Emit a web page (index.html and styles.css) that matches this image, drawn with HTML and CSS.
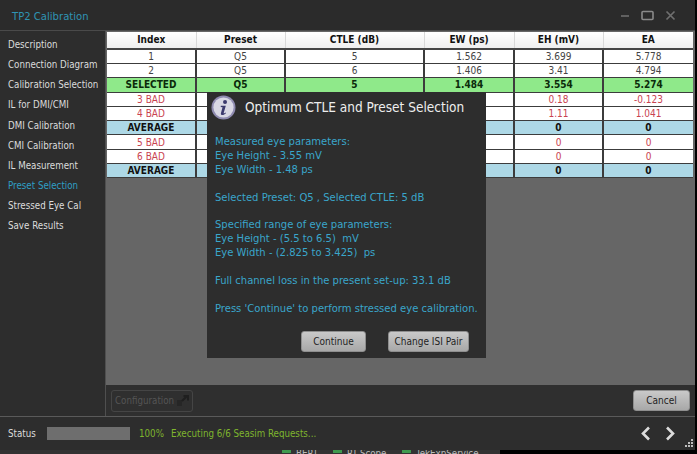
FILE: index.html
```html
<!DOCTYPE html>
<html lang="en">
<head>
  <meta charset="UTF-8" />
  <title>TP2 Calibration</title>
  <link rel="stylesheet" href="styles.css">
</head>
<body>
  <div class="window">
    <header class="titlebar">
      <span class="title">TP2 Calibration</span>
      <div class="win-controls">
        <svg width="10" height="10" viewBox="0 0 10 10"><path d="M1 6h8" stroke="#6f6f6f" stroke-width="1.6"/></svg>
        <svg width="13" height="11" viewBox="0 0 13 11"><rect x="1" y="1.5" width="11" height="8" rx="1" fill="none" stroke="#8a8a8a" stroke-width="1.6"/></svg>
        <svg width="11" height="11" viewBox="0 0 11 11"><path d="M1.5 1.5l8 8M9.5 1.5l-8 8" stroke="#6f6f6f" stroke-width="1.7"/></svg>
      </div>
    </header>

    <div class="body">
      <nav class="sidebar">
        <a>Description</a>
        <a>Connection Diagram</a>
        <a>Calibration Selection</a>
        <a>IL for DMI/CMI</a>
        <a>DMI Calibration</a>
        <a>CMI Calibration</a>
        <a>IL Measurement</a>
        <a class="active">Preset Selection</a>
        <a>Stressed Eye Cal</a>
        <a>Save Results</a>
      </nav>

      <main class="main">
        <div class="content">
          <table class="results">
            <thead>
              <tr><th>Index</th><th>Preset</th><th>CTLE (dB)</th><th>EW (ps)</th><th>EH (mV)</th><th>EA</th></tr>
            </thead>
            <tbody>
              <tr><td>1</td><td>Q5</td><td>5</td><td>1.562</td><td>3.699</td><td>5.778</td></tr>
              <tr><td>2</td><td>Q5</td><td>6</td><td>1.406</td><td>3.41</td><td>4.794</td></tr>
              <tr class="selected"><td>SELECTED</td><td>Q5</td><td>5</td><td>1.484</td><td>3.554</td><td>5.274</td></tr>
              <tr class="bad"><td>3 BAD</td><td></td><td></td><td></td><td>0.18</td><td>-0.123</td></tr>
              <tr class="bad"><td>4 BAD</td><td></td><td></td><td></td><td>1.11</td><td>1.041</td></tr>
              <tr class="average"><td>AVERAGE</td><td></td><td></td><td></td><td>0</td><td>0</td></tr>
              <tr class="bad"><td>5 BAD</td><td></td><td></td><td></td><td>0</td><td>0</td></tr>
              <tr class="bad"><td>6 BAD</td><td></td><td></td><td></td><td>0</td><td>0</td></tr>
              <tr class="average"><td>AVERAGE</td><td></td><td></td><td></td><td>0</td><td>0</td></tr>
            </tbody>
          </table>

          <div class="dialog">
            <div class="dialog-head">
              <svg class="info-icon" width="25" height="25" viewBox="0 0 26 26">
                <circle cx="13" cy="13" r="12.5" fill="#8f8bb0"/>
                <circle cx="13" cy="13" r="10.5" fill="#d9d8e4"/>
                <circle cx="14.6" cy="7.2" r="2.1" fill="#3c3a6e"/>
                <path d="M10.2 11.2h5.2l-2.2 7.6c-.1.5.3.6.8.3l1.2-.8.3.6c-1.2 1.2-2.4 1.9-3.6 1.9-1.3 0-1.9-.7-1.6-1.9l1.7-6.1-1.9-.4z" fill="#3c3a6e"/>
              </svg>
              <h2>Optimum CTLE and Preset Selection</h2>
            </div>
            <div class="dialog-text">
              <p>Measured eye parameters:<br>Eye Height - 3.55 mV<br>Eye Width - 1.48 ps</p>
              <p>Selected Preset: Q5 , Selected CTLE: 5 dB</p>
              <p>Specified range of eye parameters:<br>Eye Height - (5.5 to 6.5)&nbsp; mV<br>Eye Width - (2.825 to 3.425)&nbsp; ps</p>
              <p>Full channel loss in the present set-up: 33.1 dB</p>
              <p>Press 'Continue' to perform stressed eye calibration.</p>
            </div>
            <div class="dialog-actions">
              <button class="btn btn-continue">Continue</button>
              <button class="btn btn-isi">Change ISI Pair</button>
            </div>
          </div>
        </div>

        <div class="action-bar">
          <div class="config-btn">
            <span>Configuration</span>
            <svg width="12" height="11" viewBox="0 0 12 11"><path d="M0 5h5v6H0z" fill="#262626"/><path d="M5 6l5-5M6.5 1H11v4.5" stroke="#1f1f1f" stroke-width="2" fill="none"/></svg>
          </div>
          <button class="btn btn-cancel">Cancel</button>
        </div>
      </main>
    </div>

    <footer class="statusbar">
      <span class="status-label">Status</span>
      <div class="progress"></div>
      <span class="percent">100%</span>
      <span class="status-msg">Executing 6/6 Seasim Requests...</span>
      <div class="nav-arrows">
        <svg width="10" height="15" viewBox="0 0 10 15"><path d="M8 1.5l-6 6 6 6" fill="none" stroke="#dcdcdc" stroke-width="2.6"/></svg>
        <svg width="10" height="15" viewBox="0 0 10 15"><path d="M2 1.5l6 6-6 6" fill="none" stroke="#dcdcdc" stroke-width="2.6"/></svg>
      </div>
      <svg class="grip" width="9" height="9" viewBox="0 0 9 9">
        <path d="M7 0h2v2H7zM4 3h2v2H4zM7 3h2v2H7zM1 6h2v2H1zM4 6h2v2H4zM7 6h2v2H7z" fill="#bdbdbd"/>
      </svg>
    </footer>
  </div>

  <div class="taskbar">
    <div class="task-items">
      <span class="task task-bert"><i></i>BERT</span>
      <span class="task task-scope"><i></i>RT-Scope</span>
      <span class="task"><i></i>TekExpService</span>
    </div>
  </div>
</body>
</html>
```

FILE: styles.css
```css
* {
  box-sizing: border-box;
}

html, body {
  margin: 0;
  padding: 0;
  height: 100%;
}

body {
  width: 697px;
  height: 454px;
  overflow: hidden;
  background: #000;
  font-family: "DejaVu Sans Condensed", "DejaVu Sans", sans-serif;
  font-stretch: condensed;
  font-size: 9.7px;
  color: #ddd;
}

.window {
  width: 695px;
  height: 450px;
  background: #2d2d2d;
  display: flex;
  flex-direction: column;
}

.titlebar {
  height: 30px;
  flex: none;
  display: flex;
  align-items: center;
  justify-content: space-between;
  padding: 0 19px 0 12px;
  background: #2b2b2b;
}

.title {
  color: #2f93b3;
  font-size: 11.2px;
  padding-top: 2px;
}

.win-controls {
  display: flex;
  align-items: center;
  gap: 11px;
}

.body {
  flex: 1;
  display: flex;
  min-height: 0;
  border-bottom: 1px solid #5a5a5a;
}

.sidebar {
  width: 106px;
  flex: none;
  padding-top: 4px;
  background: #2d2d2d;
  border-top: 1px solid #4a4a4a;
  border-right: 1px solid #4f4f4f;
  display: flex;
  flex-direction: column;
}

.sidebar a {
  height: 20.15px;
  line-height: 20px;
  padding-left: 8px;
  color: #dcdcdc;
  white-space: nowrap;
}

.sidebar a.active {
  color: #2f9fc4;
}

.main {
  flex: 1;
  display: flex;
  flex-direction: column;
  min-width: 0;
}

.content {
  position: relative;
  height: 355px;
  flex: none;
  background: #666;
  padding: 1px 2px 0 1px;
  border-top: 1px solid #4a4a4a;
}

.results {
  width: 586px;
  table-layout: fixed;
  border-collapse: collapse;
  background: #fff;
  font-size: 10px;
  text-align: center;
  line-height: 12px;
}

.results th {
  height: 17px;
  padding: 0;
  color: #111;
  font-weight: 700;
  background: linear-gradient(#ffffff, #eeeeee);
  border-right: 1px solid #d8d8d8;
  border-bottom: 2px solid #444;
}

.results td {
  height: 14.3px;
  padding: 1px 0 0;
  color: #444;
  border: 1px solid #3c3c3c;
  border-width: 0 2px 1px 0;
}

.results th:nth-child(1) { width: 89px; }
.results th:nth-child(2) { width: 89px; }
.results th:nth-child(3) { width: 139px; }
.results th:nth-child(4) { width: 90px; }
.results th:nth-child(5) { width: 89px; }

.results td:last-child,
.results th:last-child {
  border-right: 0;
}

.selected td {
  background: #8fe98a;
  color: #0b2a0b;
  font-weight: 700;
}

.results .bad td {
  color: #c9434f;
}

.results .average td {
  background: #add8e6;
  color: #111;
  font-weight: 700;
}

.dialog {
  position: absolute;
  left: 101px;
  top: 61px;
  width: 279px;
  height: 266px;
  background: #2d2d2d;
  padding: 0 8px;
  display: flex;
  flex-direction: column;
}

.dialog-head {
  display: flex;
  align-items: center;
  gap: 9px;
  height: 30px;
  margin-left: -4px;
}

.dialog-head h2 {
  margin: 0;
  font-size: 13.5px;
  font-weight: 400;
  color: #eee;
  white-space: nowrap;
}

.dialog-text {
  margin-top: 13px;
  color: #3aa6cb;
  font-size: 11.15px;
  line-height: 13.9px;
  white-space: nowrap;
}

.dialog-text p {
  margin: 0 0 13.9px;
}

.dialog-actions {
  display: flex;
  justify-content: flex-end;
  gap: 22px;
  padding-right: 9px;
  margin-top: auto;
  margin-bottom: 6px;
}

.btn {
  height: 21px;
  padding: 0;
  border: 1px solid #8e8e8e;
  border-radius: 3px;
  background: linear-gradient(#c9c9c9, #a8a8a8);
  color: #222;
  font-family: inherit;
  font-stretch: inherit;
  font-size: 10px;
  white-space: nowrap;
}

.btn-continue { width: 65px; }
.btn-isi { width: 81px; }
.btn-cancel { width: 57px; }

.action-bar {
  flex: 1;
  display: flex;
  align-items: center;
  justify-content: space-between;
  padding: 0 5px 0 5px;
  background: #2f2f2f;
}

.config-btn {
  width: 82px;
  display: flex;
  align-items: center;
  justify-content: space-between;
  height: 22px;
  padding: 0 3px 0 3px;
  border: 1px solid #454545;
  border-radius: 3px;
  color: #555;
}

.statusbar {
  position: relative;
  height: 33px;
  flex: none;
  display: flex;
  align-items: center;
  padding-left: 8px;
  background: #2d2d2d;
}

.status-label {
  width: 39px;
  color: #dcdcdc;
}

.progress {
  width: 83px;
  height: 13px;
  background: #6e6e6e;
  margin-right: 9px;
}

.percent {
  width: 32px;
  color: #7fb52e;
}

.status-msg {
  color: #7fb52e;
}

.nav-arrows {
  margin-left: auto;
  margin-right: 20px;
  display: flex;
  gap: 14px;
}

.grip {
  position: absolute;
  right: 2px;
  bottom: 2px;
}

.taskbar {
  height: 4px;
  width: 500px;
  background: #333;
  overflow: hidden;
  padding-left: 282px;
}

.task-items {
  display: flex;
  margin-top: -3px;
  color: #bbb;
  line-height: 13px;
}

.task {
  display: flex;
  gap: 5px;
}

.task-bert { width: 51px; }
.task-scope { width: 69px; }

.task i {
  flex: none;
  width: 9px;
  height: 6px;
  background: #3f9a4f;
}
```
